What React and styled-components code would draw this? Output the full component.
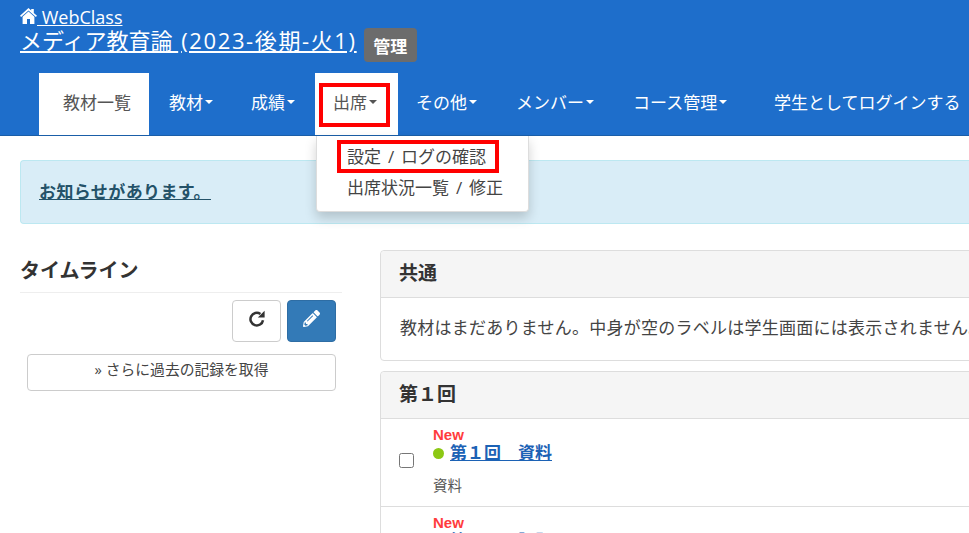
import React from "react";
import styled, { createGlobalStyle } from "styled-components";
import { FaPencilAlt } from "react-icons/fa";

const GlobalStyle = createGlobalStyle`
html, body {
  margin: 0;
  padding: 0;
  background: #fff;
  overflow: hidden;
}
body {
  font-family: "Open Sans", "Noto Sans CJK JP", sans-serif;
  font-size: 14px;
  color: #333;
}
`

const Page = styled.div`
width: 969px;
height: 533px;
overflow: hidden;
position: relative;
`
const Header = styled.header`
height: 136px;
box-sizing: border-box;
background: #1e6ecb;
border-bottom: 1px solid #1a5ea8;
padding: 8px 0 0 20px;
`
const HomeLink = styled.a`
display: block;
width: fit-content;
height: 17px;
color: #fff;
font-size: 18px;
line-height: 17px;
white-space: pre;
text-decoration: underline;
svg {
  vertical-align: 0;
}
`
const TitleRow = styled.div`
display: flex;
align-items: flex-start;
gap: 7px;
height: 34px;
margin-top: 3px;
`
const Title = styled.a`
color: #fff;
font-size: 22px;
line-height: 24px;
text-decoration: underline;
white-space: nowrap;
`
const TitleTail = styled.span`
margin-left: 3px;
letter-spacing: 1.62px;
`
const Badge = styled.span`
display: flex;
align-items: center;
justify-content: center;
width: 53px;
height: 34px;
background: #6c6c6c;
border-radius: 4px;
color: #fff;
font-size: 17px;
font-weight: 700;
`
const Nav = styled.nav`
display: flex;
margin: 11px 0 0 19px;
height: 62px;
white-space: nowrap;
`
const Tab = styled.div`
display: flex;
align-items: center;
height: 62px;
width: ${p => p.$w}px;
flex: none;
box-sizing: border-box;
padding-left: ${p => p.$pad}px;
padding-bottom: 5px;
background: ${p => (p.$active ? "#fff" : "transparent")};
color: ${p => (p.$active ? "#555" : "#fff")};
font-size: 17px;
`
const Caret = styled.span`
display: inline-block;
margin-left: 2px;
margin-top: 1px;
border-top: 4.5px solid currentColor;
border-left: 4.5px solid transparent;
border-right: 4.5px solid transparent;
`
const RedBox = styled.div`
position: absolute;
border: 4px solid #f00;
box-sizing: border-box;
left: ${p => p.$x}px;
top: ${p => p.$y}px;
width: ${p => p.$w}px;
height: ${p => p.$h}px;
pointer-events: none;
z-index: 3;
`
const Dropdown = styled.div`
position: absolute;
left: 316px;
top: 136px;
width: 213px;
height: 76px;
box-sizing: border-box;
padding-top: 6px;
background: #fff;
border: 1px solid #ddd;
border-top: 0;
border-radius: 0 0 4px 4px;
box-shadow: 0 6px 12px rgba(0, 0, 0, 0.18);
z-index: 2;
`
const DropItem = styled.div`
height: 31px;
line-height: 30px;
padding-left: 30px;
font-size: 17px;
word-spacing: 2.5px;
color: #444;
white-space: nowrap;
`
const Notice = styled.div`
margin: 24px 0 0 20px;
height: 64px;
box-sizing: border-box;
background: #d9edf7;
border: 1px solid #bce8f1;
border-right: 0;
border-radius: 4px 0 0 4px;
padding: 0 0 4px 18px;
display: flex;
align-items: center;
`
const NoticeLink = styled.a`
color: #245269;
font-size: 17px;
letter-spacing: 0.4px;
font-weight: 700;
text-decoration: underline;
`
const Columns = styled.div`
display: flex;
margin-top: 26px;
padding-left: 20px;
`
const Side = styled.aside`
width: 322px;
flex: none;
`
const SideTitle = styled.h2`
margin: 0;
height: 43px;
line-height: 42px;
font-size: 20px;
font-weight: 700;
color: #333;
border-bottom: 1px solid #eee;
box-sizing: border-box;
`
const SideTools = styled.div`
display: flex;
justify-content: flex-end;
gap: 6px;
margin-top: 7px;
padding-right: 6px;
`
const ToolButton = styled.button`
display: flex;
align-items: center;
justify-content: center;
width: 49px;
height: 42px;
padding: 0 0 6px;
border-radius: 4px;
border: 1px solid ${p => (p.$primary ? "#2e6da4" : "#ccc")};
background: ${p => (p.$primary ? "#337ab7" : "#fff")};
color: ${p => (p.$primary ? "#fff" : "#333")};
font-size: 18px;
`
const MoreButton = styled.div`
margin: 12px 6px 0 7px;
height: 37px;
box-sizing: border-box;
border: 1px solid #ccc;
border-radius: 4px;
text-align: center;
font-size: 14.8px;
line-height: 29px;
color: #444;
`
const Main = styled.main`
margin-left: 38px;
flex: none;
width: 800px;
display: flex;
flex-direction: column;
gap: 10px;
`
const Panel = styled.section`
border: 1px solid #ddd;
border-radius: 4px;
background: #fff;
`
const PanelHead = styled.div`
height: 47px;
box-sizing: border-box;
background: #f5f5f5;
border-bottom: 1px solid #ddd;
border-radius: 4px 4px 0 0;
padding-left: 18px;
font-size: 19px;
font-weight: 700;
line-height: 45px;
color: #333;
`
const PanelNote = styled.div`
height: 62px;
padding: 15px 0 0 19px;
box-sizing: border-box;
font-size: 17px;
letter-spacing: 0.25px;
line-height: 30px;
color: #444;
white-space: nowrap;
`
const Item = styled.div`
display: flex;
height: 88px;
box-sizing: border-box;
border-bottom: 1px solid #ddd;
padding: 9px 0 0 18px;
`
const Check = styled.input`
width: 15px;
height: 15px;
margin: 25px 19px 0 0;
flex: none;
`
const ItemBody = styled.div`
display: flex;
flex-direction: column;
`
const NewLabel = styled.span`
color: #ff3c3c;
font-family: "Liberation Sans", sans-serif;
font-size: 15px;
font-weight: 700;
line-height: 14px;
`
const ItemTitle = styled.div`
display: flex;
align-items: center;
gap: 6px;
height: 22px;
`
const Dot = styled.span`
width: 11px;
height: 11px;
border-radius: 50%;
background: #8cc814;
flex: none;
`
const ItemLink = styled.a`
color: #1c62b5;
font-size: 17px;
font-weight: 700;
line-height: 22px;
text-decoration: underline;
`
const ItemType = styled.span`
margin-top: 13px;
font-size: 14.5px;
line-height: 18px;
color: #555;
`

const HomeIcon = () => (
  <svg width="17" height="16" viewBox="0 0 17 16" fill="#fff">
    <path d="M8.5 0 0 7.8 1.1 9 8.5 2.6 15.9 9 17 7.8 13.8 4.9V1H11.2V2.5Z" />
    <path d="M8.5 3.6 2.6 8.8V16H7V11H10V16H14.4V8.8Z" />
  </svg>
);

const RepeatIcon = () => (
  <svg width="18" height="17" viewBox="0 0 18 17" fill="none">
    <path d="M15 10.2A6.3 6.3 0 1 1 12.4 4" stroke="#333" strokeWidth="2.5" />
    <path d="M16.6 0.8V7.6H9.8Z" fill="#333" />
  </svg>
);

const tabs = [
  { label: "教材一覧", w: 110, pad: 24, active: true },
  { label: "教材", w: 82, pad: 20, caret: true },
  { label: "成績", w: 84, pad: 20, caret: true },
  { label: "出席", w: 83, pad: 18, caret: true, active: true },
  { label: "その他", w: 100, pad: 18, caret: true },
  { label: "メンバー", w: 117, pad: 18, caret: true },
  { label: "コース管理", w: 141, pad: 18, caret: true },
  { label: "学生としてログインする", w: 200, pad: 18 },
];

export default function App() {
  return (
    <Page>
      <GlobalStyle />
      <Header>
        <HomeLink href="#"><HomeIcon /> WebClass</HomeLink>
        <TitleRow>
          <Title href="#">メディア教育論 <TitleTail>(2023-後期-火1)</TitleTail></Title>
          <Badge>管理</Badge>
        </TitleRow>
        <Nav>
          {tabs.map(t => (
            <Tab key={t.label} $w={t.w} $pad={t.pad} $active={t.active}>
              {t.label}{t.caret && <Caret />}
            </Tab>
          ))}
        </Nav>
      </Header>
      <RedBox $x={319} $y={83} $w={71} $h={44} />
      <Dropdown>
        <DropItem>設定 / ログの確認</DropItem>
        <DropItem>出席状況一覧 / 修正</DropItem>
      </Dropdown>
      <RedBox $x={337} $y={140} $w={162} $h={33} />
      <Notice>
        <NoticeLink href="#">お知らせがあります。</NoticeLink>
      </Notice>
      <Columns>
        <Side>
          <SideTitle>タイムライン</SideTitle>
          <SideTools>
            <ToolButton><RepeatIcon /></ToolButton>
            <ToolButton $primary><FaPencilAlt size={17} /></ToolButton>
          </SideTools>
          <MoreButton>» さらに過去の記録を取得</MoreButton>
        </Side>
        <Main>
          <Panel>
            <PanelHead>共通</PanelHead>
            <PanelNote>教材はまだありません。中身が空のラベルは学生画面には表示されません。</PanelNote>
          </Panel>
          <Panel>
            <PanelHead>第１回</PanelHead>
            <Item>
              <Check type="checkbox" />
              <ItemBody>
                <NewLabel>New</NewLabel>
                <ItemTitle><Dot /><ItemLink href="#">第１回　資料</ItemLink></ItemTitle>
                <ItemType>資料</ItemType>
              </ItemBody>
            </Item>
            <Item>
              <Check type="checkbox" />
              <ItemBody>
                <NewLabel>New</NewLabel>
                <ItemTitle><Dot /><ItemLink href="#">第１回　課題</ItemLink></ItemTitle>
              </ItemBody>
            </Item>
          </Panel>
        </Main>
      </Columns>
    </Page>
  );
}
